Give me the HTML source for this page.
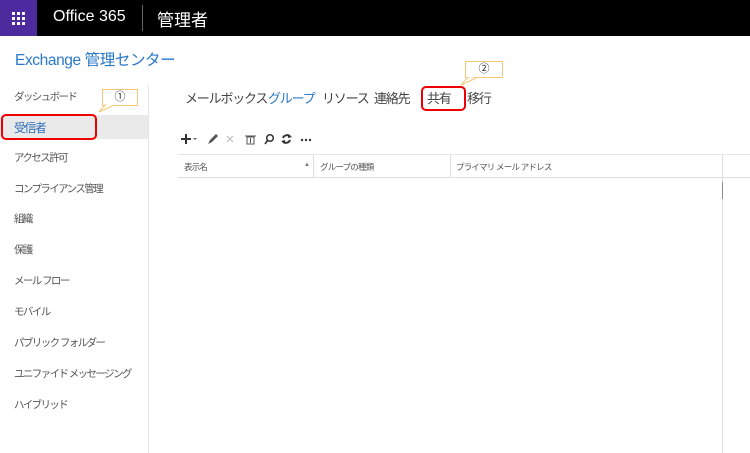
<!DOCTYPE html>
<html><head><meta charset="utf-8"><style>
*{margin:0;padding:0;box-sizing:border-box}
body{width:750px;height:453px;overflow:hidden;background:#fff;font-family:"Liberation Sans","Noto Sans CJK JP",sans-serif;position:relative;color:#444}
.top{position:absolute;left:0;top:0;width:750px;height:36px;background:#000}
.waf{position:absolute;left:0;top:0;width:37px;height:36px;background:#4d2a9e}
.abs{position:absolute;white-space:nowrap}
.nav{position:absolute;left:14px;font-size:10.5px;color:#555;letter-spacing:-1.6px}
.tab{font-size:13px;color:#444;top:88px;letter-spacing:-1.2px}
.hd{font-size:8.5px;color:#555;top:161px;letter-spacing:-0.8px}
</style></head><body>
<div class="top"></div>
<div class="waf"><svg width="37" height="36"><g fill="#fff">
<rect x="12" y="12" width="3" height="3"/><rect x="17" y="12" width="3" height="3"/><rect x="22" y="12" width="3" height="3"/>
<rect x="12" y="17" width="3" height="3"/><rect x="17" y="17" width="3" height="3"/><rect x="22" y="17" width="3" height="3"/>
<rect x="12" y="22" width="3" height="3"/><rect x="17" y="22" width="3" height="3"/><rect x="22" y="22" width="3" height="3"/></g></svg></div>
<div class="abs" style="left:53px;top:8px;color:#fff;font-size:16px">Office 365</div>
<div class="abs" style="left:142px;top:5px;width:1px;height:26px;background:#666"></div>
<div class="abs" style="left:157px;top:6px;color:#fff;font-size:17px">管理者</div>
<div class="abs" style="left:15px;top:48px;color:#2a78c8;font-size:15.5px;letter-spacing:-0.4px">Exchange 管理センター</div>
<div class="abs" style="left:148px;top:85px;width:1px;height:368px;background:#e6e6e6"></div>
<div class="abs" style="left:0;top:115px;width:148px;height:24px;background:#eaeaea"></div>
<div class="abs" style="left:1px;top:114px;width:96px;height:26px;border:2px solid #e00;border-radius:5px"></div>
<div class="nav" style="top:89px">ダッシュボード</div>
<div class="nav" style="top:119px;color:#2a6cb8;font-size:12px">受信者</div>
<div class="nav" style="top:150px">アクセス許可</div>
<div class="nav" style="top:181px">コンプライアンス管理</div>
<div class="nav" style="top:211px">組織</div>
<div class="nav" style="top:242px">保護</div>
<div class="nav" style="top:273px">メール フロー</div>
<div class="nav" style="top:304px">モバイル</div>
<div class="nav" style="top:335px">パブリック フォルダー</div>
<div class="nav" style="top:366px">ユニファイド メッセージング</div>
<div class="nav" style="top:397px">ハイブリッド</div>
<div class="abs" style="left:102px;top:89px;width:36px;height:17px;border:1px solid #f5c878;font-size:11px;text-align:center;line-height:15px;color:#333;background:#fff">①</div>
<svg class="abs" style="left:98px;top:104px" width="20" height="10"><path d="M8 0 L1 8 L16 1" fill="#fff" stroke="#f5c878"/></svg>
<div class="abs tab" style="left:185px">メールボックス</div>
<div class="abs tab" style="left:268px;color:#2a78c8">グループ</div>
<div class="abs tab" style="left:322px">リソース</div>
<div class="abs tab" style="left:374px">連絡先</div>
<div class="abs tab" style="left:427px">共有</div>
<div class="abs tab" style="left:467px">移行</div>
<div class="abs" style="left:421px;top:86px;width:45px;height:25px;border:2px solid #e00;border-radius:5px"></div>
<div class="abs" style="left:465px;top:61px;width:38px;height:17px;border:1px solid #f5c878;font-size:11px;text-align:center;line-height:15px;color:#333;background:#fff">②</div>
<svg class="abs" style="left:460px;top:77px" width="20" height="10"><path d="M8 0 L1 8 L16 1" fill="#fff" stroke="#f5c878"/></svg>
<svg class="abs" style="left:178px;top:131px" width="140" height="16">
<path d="M3 8 H13 M8 3 V13" stroke="#333" stroke-width="2"/>
<path d="M15 7 L19 7 L17 9 Z" fill="#666"/>
<path d="M30 13 L32 9 L38 3 L40 5 L34 11 Z" fill="#555"/>
<path d="M49 5 L55 11 M55 5 L49 11" stroke="#bbb" stroke-width="1"/>
<rect x="69" y="6" width="7" height="7" fill="none" stroke="#555"/><line x1="67" y1="5" x2="78" y2="5" stroke="#555"/><line x1="72.5" y1="7" x2="72.5" y2="12" stroke="#555"/>
<circle cx="92" cy="7" r="3.3" fill="none" stroke="#333" stroke-width="1.5"/><line x1="89.5" y1="9.5" x2="87" y2="13" stroke="#333" stroke-width="1.6"/>
<path d="M112 5.5 A4.2 4.2 0 0 0 105 7 M105 10.5 A4.2 4.2 0 0 0 112 9" fill="none" stroke="#333" stroke-width="2"/>
<path d="M110 3 L114 6 L110 7 Z M107 13 L103 10 L107 9 Z" fill="#333"/>
<circle cx="124" cy="9" r="1.2" fill="#333"/><circle cx="128" cy="9" r="1.2" fill="#333"/><circle cx="132" cy="9" r="1.2" fill="#333"/>
</svg>
<div class="abs" style="left:178px;top:154px;width:572px;height:1px;background:#e3e6ea"></div>
<div class="abs" style="left:178px;top:177px;width:572px;height:1px;background:#ddd"></div>
<div class="abs" style="left:313px;top:155px;width:1px;height:22px;background:#ddd"></div>
<div class="abs" style="left:450px;top:155px;width:1px;height:22px;background:#ddd"></div>
<div class="abs" style="left:722px;top:155px;width:1px;height:298px;background:#ddd"></div>
<div class="abs" style="left:722px;top:182px;width:1px;height:17px;background:#888"></div>
<div class="abs hd" style="left:184px">表示名</div>
<div class="abs" style="left:304px;top:162px;font-size:6px;color:#777">▲</div>
<div class="abs hd" style="left:320px">グループの種類</div>
<div class="abs hd" style="left:456px">プライマリ メール アドレス</div>
</body></html>
